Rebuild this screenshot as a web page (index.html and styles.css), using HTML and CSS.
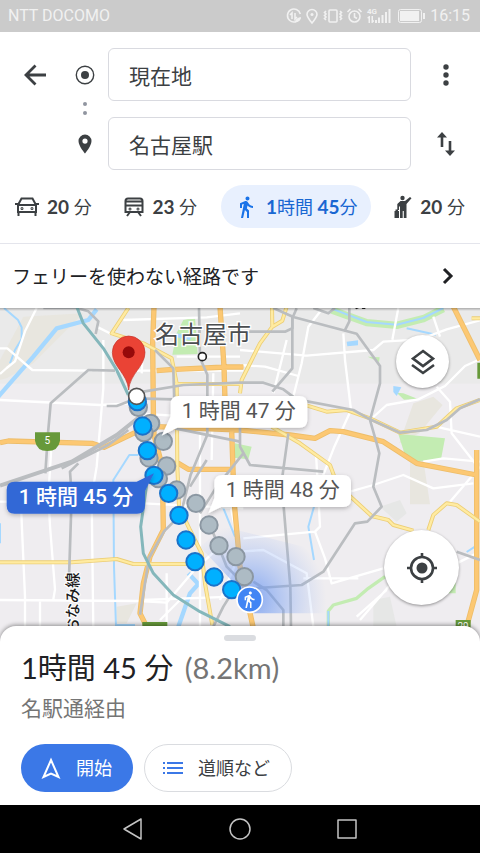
FILE: index.html
```html
<!DOCTYPE html>
<html lang="ja">
<head>
<meta charset="utf-8">
<meta name="viewport" content="width=device-width, initial-scale=1">
<title>経路</title>
<link rel="stylesheet" href="styles.css">
</head>
<body>
<div class="status">
  <span>NTT DOCOMO</span>
  <div class="status-icons">
    <svg width="108" height="20" viewBox="0 0 108 20" fill="none" stroke="#f1f1f1" stroke-width="1.6" aria-hidden="true">
      <path d="M14 12A6.500 6.500 0 1 1 14.300 8M6 13V7l-2 2M9 7v6l2-2"/><path d="M9 16q0-4 6-5q0 5-6 5z" fill="#f1f1f1" stroke="none"/>
      <path d="M26 17c-3-3.600-5-6-5-8.500a5 5 0 0 1 10 0c0 2.500-2 4.900-5 8.500z"/><circle cx="26" cy="8.500" r="1.500" fill="#f1f1f1" stroke="none"/>
      <rect x="43" y="4" width="8" height="12" rx="1"/><path d="M40 5l-1.500 1.500L40 8l-1.500 1.500L40 11l-1.500 1.500L40 14M54 5l1.500 1.500L54 8l1.500 1.500L54 11l1.500 1.500L54 14"/>
      <circle cx="68.500" cy="10.500" r="5.500"/><path d="M68.500 7v4l2.500 1.500M61.500 6l3-3M75.500 6l-3-3"/>
      <g fill="#f1f1f1" stroke="none"><text class="signal" x="81" y="8">4G</text>
      <path d="M81 12l2-2h1v7h-1.500v-4.500zM85.500 10H87v4.500L88 14v1.500L86.500 17h-1zM89 14h2v3h-2zM92 11.500h2V17h-2zM95.500 9h2v8h-2zM99 6h2v11h-2zM102.500 3h2v14h-2z"/></g>
    </svg>
    <svg width="28" height="14" viewBox="0 0 28 14" fill="none" stroke="#f1f1f1" aria-hidden="true"><rect x=".5" y=".5" width="23" height="13" rx="2"/><rect x="2" y="2" width="19" height="10" fill="#f1f1f1" stroke="none"/><path d="M26 4v6" stroke-width="2"/></svg>
    <span>16:15</span>
  </div>
</div>

<header class="planner">
  <form class="fields">
    <button class="icon-btn" type="button" aria-label="戻る"><svg width="24" height="24" viewBox="0 0 24 24" fill="none" stroke="#3c4043" stroke-width="2.800"><path d="M23 12H3M12.500 2.500L3 12l9.500 9.500"/></svg></button>
    <svg class="mark" width="20" height="20" viewBox="0 0 20 20" aria-hidden="true"><circle cx="10" cy="10" r="8.700" fill="none" stroke="#3c4043" stroke-width="1.400"/><circle cx="10" cy="10" r="4" fill="#3c4043"/></svg>
    <input class="place" type="text" value="現在地" aria-label="出発地">
    <button class="icon-btn" type="button" aria-label="その他"><svg width="24" height="24" viewBox="0 0 24 24" fill="#3c4043"><circle cx="12" cy="4" r="2.700"/><circle cx="12" cy="12" r="2.700"/><circle cx="12" cy="20" r="2.700"/></svg></button>
    <svg class="link-dots" width="6" height="16" viewBox="0 0 6 16" fill="#9095a0" aria-hidden="true"><circle cx="3" cy="3" r="2"/><circle cx="3" cy="12" r="2"/></svg>
    <svg class="mark row-end" width="14" height="20" viewBox="0 0 14 20" aria-hidden="true"><path fill-rule="evenodd" fill="#3c4043" d="M7 .5a6.500 6.500 0 0 0-6.500 6.500C.5 12 7 19.500 7 19.500S13.500 12 13.500 7A6.500 6.500 0 0 0 7 .5zM7 9.700a2.600 2.600 0 1 1 0-5.200 2.600 2.600 0 0 1 0 5.200z"/></svg>
    <input class="place row-end" type="text" value="名古屋駅" aria-label="目的地">
    <button class="icon-btn row-end" type="button" aria-label="入れ替え"><svg width="20" height="24" viewBox="0 0 20 24" fill="#3c4043"><path d="M6 0l5 5.500H7.300V15H4.700V5.500H1zM14 24l-5-5.500h3.700V9h2.600v9.500H19z"/></svg></button>
  </form>
  <nav class="modes">
    <button class="mode" type="button"><svg width="24" height="20" viewBox="0 0 24 20" fill="none" stroke="#3c4043" stroke-width="2"><path d="M3 8L6.500 1.500h11L21 8M3 8h18v7H3zM3.500 15v4M20.500 15v4M0 7h3M21 7h3"/><circle cx="7" cy="11.500" r=".5"/><circle cx="17" cy="11.500" r=".5"/></svg><span><b>20</b> 分</span></button>
    <button class="mode" type="button"><svg width="20" height="20" viewBox="0 0 20 20" fill="none" stroke="#3c4043" stroke-width="2"><path d="M1.500 4Q1.500 1.500 4 1.500h12Q18.500 1.500 18.500 4V15h-17zM2 4.500h16M2 8.500h16M6 15l-3 4M14 15l3 4"/><circle cx="6" cy="12" r=".5"/><circle cx="14" cy="12" r=".5"/></svg><span><b>23</b> 分</span></button>
    <button class="mode active" type="button" aria-pressed="true"><svg width="24" height="24" viewBox="0 0 24 24" fill="#1a73e8"><path d="M13.500 5.500c1.100 0 2-.9 2-2s-.9-2-2-2-2 .9-2 2 .9 2 2 2zM9.800 8.900L7 23h2.100l1.800-8 2.100 2v6h2v-7.500l-2.100-2 .6-3C14.800 12 16.800 13 19 13v-2c-1.900 0-3.500-1-4.300-2.400l-1-1.600c-.4-.6-1-1-1.700-1-.3 0-.5.1-.8.1L6 8.300V13h2V9.600z"/></svg><span><b>1</b>時間 <b>45</b>分</span></button>
    <button class="mode" type="button"><svg width="18" height="24" viewBox="0 0 18 24" fill="#3c4043"><circle cx="8.500" cy="3" r="2.200"/><path d="M16 2l1.500 1.300L12.500 9v14h-2.700v-7H8.700v7H6V11l-1 1v3H3.300V9L6.500 6H11zM.5 16H5v7H.5zM1.500 14.500H4V16H1.500z"/></svg><span><b>20</b> 分</span></button>
  </nav>
</header>

<a class="notice" href="#route"><span>フェリーを使わない経路です</span><svg width="12" height="18" viewBox="0 0 12 18" fill="none" stroke="#202124" stroke-width="3" aria-hidden="true"><path d="M2 2l7 7-7 7"/></svg></a>

<main class="map">
  <svg class="map-canvas" viewBox="0 24 1440 1002" preserveAspectRatio="xMidYMin slice" role="img" aria-label="名古屋市の地図">
    <defs>
      <radialGradient id="beam" gradientUnits="userSpaceOnUse" cx="749" cy="899" r="230"><stop offset="0" stop-color="#5b8cf0" stop-opacity=".75"/><stop offset="1" stop-color="#8fb0f5" stop-opacity="0"/></radialGradient>
      <filter id="soft" x="-10%" y="-20%" width="120%" height="150%"><feDropShadow dx="0" dy="5" stdDeviation="6" flood-opacity=".25"/></filter>
    </defs>
    <rect y="24" width="1440" height="1002" fill="#efedf0"/>
    <rect y="24" width="1440" height="227" fill="#eaeaea"/>
    <path fill="#e8e6df" d="M70 50L250 40 100 190 20 235 0 240V180zM1240 310l60-20 28 25-70 85-60 30zM1230 480h40l20 133h-60zM350 920l60-10-30 60h-30z"/>
    <path fill="#e6e7e6" d="M1140 620l60-20 20 40-30 25zM1120 900l50-10 20 90h-70z"/>
    <path fill="#c3ecb2" d="M550 60l35-8 8 110-76 2 13-65zM1195 402l140 13-12 63-85 7-25-25zM1190 278l20 2 42 16-40 3zM1103 170l36 2-2 14zM705 430l50 10-10 38-45-5zM1345 835h22v45h-22z"/>
    <path class="grass" d="M995 30l105 38 90 8 80-20 60-30"/>
    <path class="grass thin" d="M1155 830l-50 35-35 30-70 20-15 18v50"/>
    <g class="water">
      <path d="M12 24l42 36 11 22v35l-20 33-15 40"/><path class="wide" d="M290 28l-25 32-95 25-70 85-60 68-50 58"/>
      <path d="M415 465h-27l-48 75 2 260 6 180M345 975h60M0 670v60"/><path class="wide" d="M565 820l30 32-25 28-35 100"/>
      <path d="M995 26l105 40 90 8 80-20 60-30M1220 85l88 19M942 620l-17 60 17 100M1400 756l26-17M985 933v45M660 600l45 110"/>
    </g>
    <path fill="#a5d8ff" d="M1040 125l34-4v15l-32 3zM1180 258l24 4-14 26-10-12zM530 100l45 10-5 10-40-8z"/>
    <g class="street">
      <path d="M110 24l-35 70-30 90-25 20-20 18M0 145h22l75 65 180 2M290 80l50 25M310 120v145L290 500l-15 90 5 400M370 60l250-8 100-12M430 130l-5 90M310 212h420"/>
      <path d="M0 300l300 15 90-5M155 428l-10 160 5 90 15 190-5 30M60 550l15 340v90M0 900l420 3M120 900v80M0 605l430 5 300 15M420 903l80 5 85-100 55-50"/>
      <path d="M430 900l270-10M480 960l60-60M500 820v150M600 400v600M640 220l-5 260M410 340l320 20M530 170h190"/>
      <path d="M720 150l200 17 200-17 30-25 110-7 80-30 100-27M720 195l75 5 100 28M960 35l-35 45-20 110-30 120M860 120l-40 160M1195 24l-18 95M1030 100l5 80 18 150-50 110-35 90M1300 50l20 60"/>
      <path d="M1110 360l50-45 95-17 80-40 60-60 45-20M1310 260l40 45 5 95 70 90M1310 380l20 5 110 25M1440 500l-90 105M1270 485l60-10 110 10M1050 575l70-20 90-30 90 40 120-15"/>
      <path d="M730 715l215-20 15-15-12-220M945 695l30 80 20 75 155-45M720 755l70-5 130 70 20 160M1070 950l90-80M1080 960l180-210M1370 790l60-30M680 560l40 200-60 140M910 835h165"/>
    </g>
    <g class="orange-edge"><path d="M462 20l-4 110 2 200 2 75 25 95 3 190-40 80-20 80-10 90 20 40M660 20l12 180 3 100 20 90 7 210 18 200 40 185M470 212l40-3 170-8h50M0 428l25-5 250 7 37 12 88-42 70-20 250 10 150 15 75 10 45-23 40 3 120 30 100 65 180 35M1360 20l80 160M1430 450v420l-30 110M500 490h35l30 18h135"/></g>
    <g class="orange"><path d="M462 20l-4 110 2 200 2 75 25 95 3 190-40 80-20 80-10 90 20 40M660 20l12 180 3 100 20 90 7 210 18 200 40 185M470 212l40-3 170-8h50M0 428l25-5 250 7 37 12 88-42 70-20 250 10 150 15 75 10 45-23 40 3 120 30 100 65 180 35M1360 20l80 160M1430 450v420l-30 110M500 490h35l30 18h135"/></g>
    <g class="yellow-edge"><path d="M385 24l-50 76 95 30 85 45 5 25 10 50 2 250 5 120 33 70 35 70 10 90 22 125M525 252h195M816 20l1 60-37 50-25 50-30 60-5 40M860 20l-13 42-30 18M900 310l80 25 60-5 70 25 90 43 110-18 60-55 70-25M815 380l85 50 90 65 13 35M1030 570l85 78 50 12 15 15 60 17M0 787h215l135-10 50 15h165M1285 690l15-45 40-35 30 5 70 50M1415 55h25"/></g>
    <g class="yellow"><path d="M385 24l-50 76 95 30 85 45 5 25 10 50 2 250 5 120 33 70 35 70 10 90 22 125M525 252h195M816 20l1 60-37 50-25 50-30 60-5 40M860 20l-13 42-30 18M900 310l80 25 60-5 70 25 90 43 110-18 60-55 70-25M815 380l85 50 90 65 13 35M1030 570l85 78 50 12 15 15 60 17M0 787h215l135-10 50 15h165M1285 690l15-45 40-35 30 5 70 50M1415 55h25"/></g>
    <g class="rail">
      <path d="M130 24h100l35 10 30 30-8 38M345 212l-80-2-113 100-8 90-8 120M235 490l-25 25 5 70-8 250M320 318h30l60-23 110 3M597 24l3 150 22 50v180l-50 120-30 120-50 50-45 80-27 170"/>
      <path class="heavy" d="M425 345l-75 60-135 80-215 72"/><path d="M385 390l-60 45-140 70"/>
      <path d="M430 275l120-20 170-7h70l60 20 40 30 170 32 50 28 90 40 80-8 60-30 40-35 60-27M465 150l55 55 5 180 195 40M720 95h135l22-10V55l13-30M820 24l60 27 190 50 70 97v52l-30 110 20 70 8 30-18 100 25 60-43 45-37 5-95 145-65 40-145 10"/>
      <path d="M877 50v155l-60 70M865 400l-18 130 4 90 20 240 2 120M940 24l45 16 20-16M1048 24v40l-15 30M720 360v80l30 55 220 20M1370 755l70 25M760 845l40 25 50 60v50M620 480l-50 80M730 460l-80 100-50 80M640 700l40 100 40 40-50 80-30 60"/>
    </g>
    <path class="teal" d="M230 20l20 50 60 75 40 65 35 75M440 555l-18 125 8 80 30 60 60 65 80 50 90 45"/>
    <path fill="url(#beam)" d="M749 899L600 740l70-60 280 70 60 190-250 0z"/>
    <path fill="#1f1f1f" d="M1065 24h12l-8 4zM1085 24h10l2 3h-10z"/>
    <path fill="#67993a" d="M105 397h75v25q-5 31-38 31-32 0-37-31zM427 966h75v40h-75zM1367 960h45v40h-45zM1432 188h8v48h-8z"/>
    <text class="shield" x="142" y="433">5</text><text class="shield" x="1389" y="989">29</text>
    <text class="city" x="465" y="130">名古屋市</text>
    <circle cx="607" cy="170" r="12" fill="#fff" stroke="#222" stroke-width="5"/>
    <text class="line-name" transform="translate(235 817) rotate(-90)">おなみ線</text>
    <g class="alt"><circle cx="415" cy="322" r="26"/><circle cx="452" cy="370" r="26"/><circle cx="432" cy="398" r="26"/><circle cx="490" cy="424" r="26"/><circle cx="447" cy="474" r="26"/><circle cx="500" cy="498" r="26"/><circle cx="475" cy="536" r="26"/><circle cx="530" cy="570" r="26"/><circle cx="588" cy="610" r="26"/><circle cx="627" cy="675" r="26"/><circle cx="657" cy="737" r="26"/><circle cx="708" cy="770" r="26"/><circle cx="733" cy="830" r="26"/></g>
    <g class="main-route"><circle cx="412" cy="305" r="26"/><circle cx="428" cy="378" r="26"/><circle cx="442" cy="452" r="26"/><circle cx="462" cy="526" r="26"/><circle cx="506" cy="580" r="26"/><circle cx="537" cy="646" r="26"/><circle cx="558" cy="720" r="26"/><circle cx="585" cy="785" r="26"/><circle cx="642" cy="831" r="26"/><circle cx="695" cy="869" r="26"/></g>
    <path d="M386 270c-4-50-49-70-49-113a49 49 0 0 1 98 0c0 43-45 63-49 113z" fill="#ea4335" stroke="#c5352b" stroke-width="2"/><circle cx="386" cy="157" r="18" fill="#960a0a"/>
    <circle cx="410" cy="289" r="24" fill="#fff" stroke="#555" stroke-width="5"/>
    <circle cx="749" cy="899" r="38" fill="#4285f4" stroke="#fff" stroke-width="5"/>
    <path transform="translate(720 871) scale(2.300)" fill="#fff" d="M13.500 5.500c1.100 0 2-.9 2-2s-.9-2-2-2-2 .9-2 2 .9 2 2 2zM9.800 8.900L7 23h2.100l1.800-8 2.100 2v6h2v-7.500l-2.100-2 .6-3C14.800 12 16.800 13 19 13v-2c-1.900 0-3.500-1-4.300-2.400l-1-1.600c-.4-.6-1-1-1.700-1-.3 0-.5.1-.8.1L6 8.300V13h2V9.600z"/>
    <path filter="url(#soft)" fill="#fff" d="M536 288h362q24 0 24 24v47q0 24-24 24H532l-47 24 27-58v-37q0-24 24-24z"/>
    <path filter="url(#soft)" fill="#fff" d="M667 525h362q24 0 24 24v48q0 24-24 24H663l-38 19 18-46v-45q0-24 24-24z"/>
    <path filter="url(#soft)" fill="#3367d6" d="M44 545h366l52-25-27 53v44q0 24-24 24H44q-24 0-24-24v-48q0-24 24-24z"/>
    <text class="tag" x="716" y="354">1 時間 47 分</text><text class="tag" x="848" y="592">1 時間 48 分</text><text class="tag chosen" x="228" y="612">1 時間 45 分</text>
  </svg>
  <button class="fab layers" type="button" aria-label="レイヤ"><svg width="24" height="26" viewBox="0 0 24 26" fill="none" stroke="#3c4043" stroke-width="2.600"><path d="M12 2l10 7.500-10 7.500-10-7.500zM1 16l11 8 11-8"/></svg></button>
  <button class="fab locate" type="button" aria-label="現在地を表示"><svg width="30" height="30" viewBox="0 0 30 30" fill="none" stroke="#3c4043" stroke-width="2.600"><circle cx="15" cy="15" r="11"/><path d="M15 0v5M15 25v5M0 15h5M25 15h5"/><circle cx="15" cy="15" r="5.500" fill="#3c4043" stroke="none"/></svg></button>
</main>

<section class="sheet" id="route">
  <div class="handle"></div>
  <h1>1<span class="unit">時間</span> 45 分 <span class="distance">(8.2km)</span></h1>
  <p>名駅通経由</p>
  <div class="actions">
    <button class="primary" type="button"><svg width="20" height="22" viewBox="0 0 20 22" fill="none" stroke="#fff" stroke-width="2"><path d="M10 3l7.500 17-7.500-3.500L2.500 20z"/></svg>開始</button>
    <button class="secondary" type="button"><svg width="20" height="12" viewBox="0 0 20 12" stroke="#3b78e7" stroke-width="2"><path d="M4 1h16M4 6h16M4 11h16M0 1h2M0 6h2M0 11h2"/></svg>道順など</button>
  </div>
</section>

<footer class="system-nav">
  <button type="button" aria-label="戻る"><svg width="22" height="24" viewBox="0 0 22 24"><path d="M2 12L19 2v20z"/></svg></button>
  <button type="button" aria-label="ホーム"><svg width="24" height="24" viewBox="0 0 24 24"><circle cx="12" cy="12" r="10"/></svg></button>
  <button type="button" aria-label="最近使ったアプリ"><svg width="22" height="22" viewBox="0 0 22 22"><path d="M2 2h18v18H2z"/></svg></button>
</footer>
</body>
</html>
```

FILE: styles.css
```css
* { box-sizing: border-box; }

body {
  margin: 0;
  min-height: 100vh;
  display: flex;
  flex-direction: column;
  background: #fff;
  color: #3c4043;
  font-family: Lato, "Noto Sans CJK JP", sans-serif;
}

button {
  border: 0;
  padding: 0;
  background: none;
  color: inherit;
  font: inherit;
}

svg { display: block; flex: none; }

.status {
  display: flex;
  align-items: center;
  justify-content: space-between;
  height: 32px;
  padding: 0 10px 0 8px;
  background: #cbcbcb;
  color: #f1f1f1;
  font: 16px/32px Roboto, sans-serif;
}

.status-icons { display: flex; align-items: center; gap: 4px; }
.signal { font: 700 8px Roboto, sans-serif; }

.planner { padding: 16px 0 15px; border-bottom: 1px solid #e4e5ec; }

.fields {
  display: grid;
  grid-template-columns: 70px 30px minmax(0, 1fr) 69px;
  grid-template-rows: 53px 16px 53px;
  align-items: center;
  justify-items: center;
}

.icon-btn { display: grid; place-items: center; width: 48px; height: 48px; }
.mark { grid-column: 2; }
.link-dots { grid-column: 2; grid-row: 2; }
.row-end { grid-row: 3; }
.icon-btn.row-end { grid-column: 4; }

.place {
  grid-column: 3;
  justify-self: stretch;
  min-width: 0;
  height: 53px;
  margin-left: 8px;
  padding: 0 20px;
  border: 1px solid #d9dae0;
  border-radius: 6px;
  background: #fff;
  color: #3c4043;
  font: 21px/28px "Noto Sans CJK JP", sans-serif;
}

.modes {
  display: flex;
  justify-content: space-between;
  margin-top: 15px;
  padding: 0 6px;
}

.mode {
  display: flex;
  align-items: center;
  gap: 8px;
  height: 43px;
  padding: 0 9px;
  border-radius: 22px;
  font-size: 18px;
  line-height: 28px;
  white-space: nowrap;
}

.mode b { font-size: 19px; }
.mode.active { padding: 0 13px; background: #e8f0fe; color: #1967d2; }

.notice {
  display: flex;
  align-items: center;
  justify-content: space-between;
  height: 64px;
  padding: 0 26px 0 12px;
  color: #202124;
  font: 19px/28px "Noto Sans CJK JP", sans-serif;
  text-decoration: none;
}

.map {
  position: relative;
  flex: 1;
  min-height: 260px;
  margin-bottom: -16px;
  overflow: hidden;
}

.map::before {
  content: "";
  position: absolute;
  inset: 0 0 auto;
  height: 3px;
  background: linear-gradient(#0004, #0000);
}

.map-canvas { position: absolute; inset: 0; width: 100%; height: 100%; z-index: -1; }

.map-canvas path { stroke-linejoin: round; }
.grass { fill: none; stroke: #c3ecb2; stroke-width: 22; }
.grass.thin { stroke-width: 10; }
.water { fill: none; stroke: #a5d8ff; stroke-width: 6; }
.water .wide { stroke-width: 13; }
.street { fill: none; stroke: #fff; stroke-width: 7; }
.orange-edge, .yellow-edge, .orange, .yellow { fill: none; }
.orange-edge { stroke: #edbd69; stroke-width: 16; }
.orange { stroke: #fcc873; stroke-width: 11; }
.yellow-edge { stroke: #ecce76; stroke-width: 12; }
.yellow { stroke: #ffeba1; stroke-width: 7; }
.rail { fill: none; stroke: #babdc0; stroke-width: 8; }
.rail .heavy { stroke-width: 12; }
.teal { fill: none; stroke: #84b7bb; stroke-width: 9; }
.alt { fill: #adbbc4; stroke: #8b97a2; stroke-width: 6; }
.main-route { fill: #00b0ff; stroke: #1b72c8; stroke-width: 6; }

.shield { fill: #fff; font: 30px Roboto, sans-serif; text-anchor: middle; }
.city { fill: #4a4d50; stroke: #fff; stroke-width: 8; paint-order: stroke; font: 72px "Noto Sans CJK JP", sans-serif; }
.line-name { fill: #1c1c1c; stroke: #fff; stroke-width: 6; paint-order: stroke; font: 500 46px "Noto Sans CJK JP", sans-serif; text-anchor: end; }
.tag { fill: #555; font: 63px Roboto, "Noto Sans CJK JP", sans-serif; text-anchor: middle; }
.tag.chosen { fill: #fff; font-weight: 500; }

.fab {
  position: absolute;
  display: grid;
  place-items: center;
  border-radius: 50%;
  background: #fff;
  box-shadow: 0 1px 3px #0006;
}

.layers { top: 27px; right: 31px; width: 53px; height: 53px; }
.locate { right: 21px; bottom: 37px; width: 75px; height: 75px; }

.sheet {
  position: relative;
  padding: 9px 21px 13px;
  border-radius: 16px 16px 0 0;
  background: #fff;
  box-shadow: 0 -1px 4px #0006;
}

.handle { width: 32px; height: 6px; margin: 0 auto; border-radius: 3px; background: #dadce0; }

h1 {
  margin: 9px 0 8px;
  color: #202124;
  font-size: 29px;
  font-weight: 400;
  line-height: 36px;
}

.distance { margin-left: 4px; color: #757575; }

.sheet p { margin: 0 0 22px; color: #757575; font-size: 21px; line-height: 28px; }

.actions { display: flex; gap: 11px; }

.actions button {
  display: flex;
  align-items: center;
  height: 48px;
  border-radius: 24px;
  font-size: 18px;
  line-height: 28px;
}

.actions .primary { gap: 15px; padding: 0 21px 0 20px; background: #3b78e7; color: #fff; }
.actions .secondary { gap: 15px; padding: 0 21px 0 18px; border: 1px solid #dadce0; }

.system-nav {
  display: flex;
  align-items: center;
  justify-content: center;
  gap: 84px;
  height: 48px;
  background: #000;
}

.system-nav svg { fill: none; stroke: #c4c4c4; stroke-width: 1.5; stroke-linejoin: round; }
```
